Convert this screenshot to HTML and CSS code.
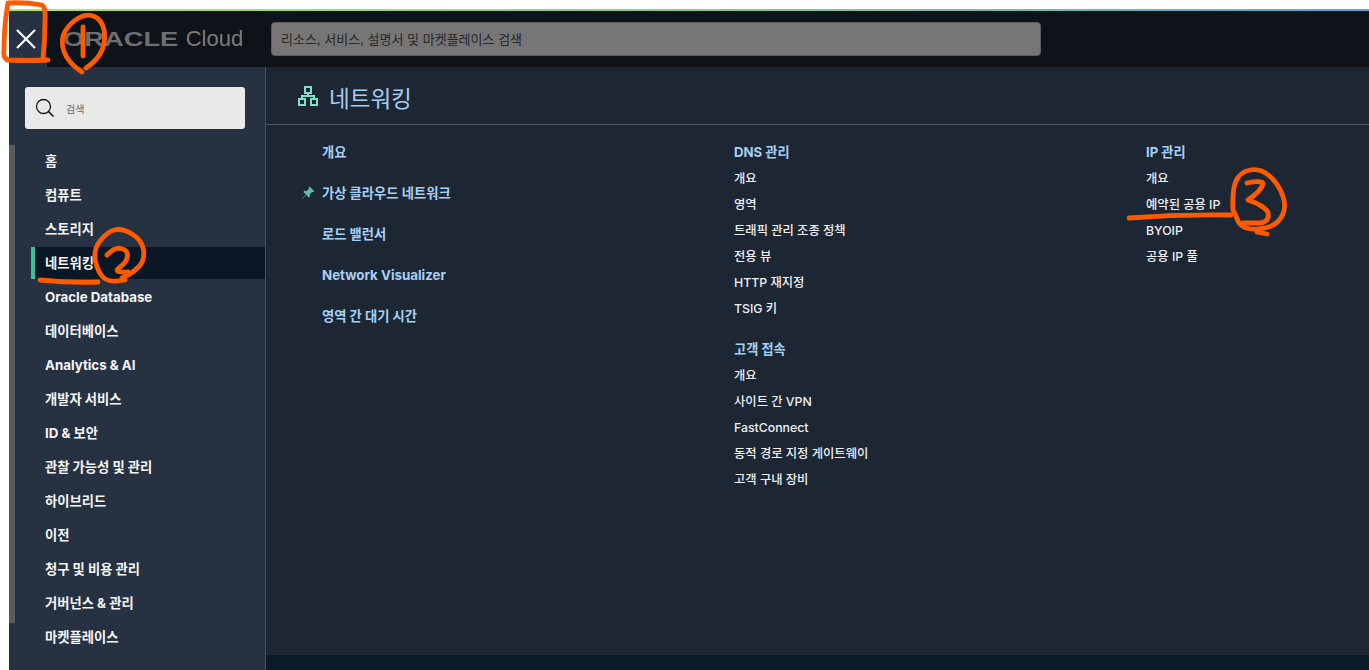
FILE: index.html
```html
<!DOCTYPE html>
<html lang="ko">
<head>
    <meta charset="UTF-8">
    <title>Oracle Cloud 네트워킹</title>
    <link rel="stylesheet" href="styles.css">
</head>
<body>
    <div class="console">
        <header class="topbar">
            <button class="close-btn" type="button">
                <svg width="20" height="20" viewBox="0 0 20 20"><path d="M1 1 19 19M19 1 1 19" stroke="#fff" stroke-width="2.2" fill="none"/></svg>
            </button>
            <div class="brand"><span class="brand-oracle">ORACLE</span><span class="brand-cloud">Cloud</span></div>
            <div class="top-search">리소스, 서비스, 설명서 및 마켓플레이스 검색</div>
        </header>
        <div class="main">
            <aside class="sidebar">
                <div class="scroll-thumb"></div>
                <div class="side-search">
                    <svg width="20" height="20" viewBox="0 0 20 20"><circle cx="8.5" cy="8.5" r="7" stroke="#1a1a1a" stroke-width="1.3" fill="none"/><path d="M13.6 13.6 18.5 18.5" stroke="#1a1a1a" stroke-width="1.6"/></svg>
                    <span>검색</span>
                </div>
                <nav class="side-nav">
                    <a>홈</a>
                    <a>컴퓨트</a>
                    <a>스토리지</a>
                    <a class="active">네트워킹</a>
                    <a>Oracle Database</a>
                    <a>데이터베이스</a>
                    <a>Analytics &amp; AI</a>
                    <a>개발자 서비스</a>
                    <a>ID &amp; 보안</a>
                    <a>관찰 가능성 및 관리</a>
                    <a>하이브리드</a>
                    <a>이전</a>
                    <a>청구 및 비용 관리</a>
                    <a>거버넌스 &amp; 관리</a>
                    <a>마켓플레이스</a>
                </nav>
            </aside>
            <section class="content">
                <h1 class="page-title">
                    <svg width="20" height="20" viewBox="0 0 20 20" fill="none" stroke="#7fe0c8" stroke-width="2"><rect x="7" y="1" width="6" height="6"/><rect x="1" y="13" width="6" height="6"/><rect x="13" y="13" width="6" height="6"/><path d="M10 7V10M4 13V10H16V13"/></svg>
                    <span>네트워킹</span>
                </h1>
                <div class="columns">
                    <div class="col col-main">
                        <a>개요</a>
                        <a class="pinned">
                            <svg class="pin" width="14" height="14" viewBox="0 0 14 14"><path d="M8.6 0.5 13.5 5.4 12.4 6.2 11.4 5.8 8.8 8.2 9 10.6 7.8 11.4 5.2 8.8 1.2 13 0.8 12.8 4.9 8.4 2.4 5.9 3.3 4.8 5.7 5 8.1 2.5 7.7 1.5Z" fill="#5fbfa2"/></svg>
                            가상 클라우드 네트워크
                        </a>
                        <a>로드 밸런서</a>
                        <a>Network Visualizer</a>
                        <a>영역 간 대기 시간</a>
                    </div>
                    <div class="col col-links">
                        <div class="group">
                            <h2>DNS 관리</h2>
                            <a>개요</a>
                            <a>영역</a>
                            <a>트래픽 관리 조종 정책</a>
                            <a>전용 뷰</a>
                            <a>HTTP 재지정</a>
                            <a>TSIG 키</a>
                        </div>
                        <div class="group">
                            <h2>고객 접속</h2>
                            <a>개요</a>
                            <a>사이트 간 VPN</a>
                            <a>FastConnect</a>
                            <a>동적 경로 지정 게이트웨이</a>
                            <a>고객 구내 장비</a>
                        </div>
                    </div>
                    <div class="col col-links">
                        <div class="group">
                            <h2>IP 관리</h2>
                            <a>개요</a>
                            <a>예약된 공용 IP</a>
                            <a>BYOIP</a>
                            <a>공용 IP 풀</a>
                        </div>
                    </div>
                </div>
            </section>
        </div>
    </div>

    <!-- 주황색 손글씨 표시 -->
    <svg class="marks" width="1369" height="670" viewBox="0 0 1369 670" fill="none" stroke="#ff5a00" stroke-width="4.8" stroke-linecap="round" stroke-linejoin="round">
        <path d="M7 59Q3 58 4 50Q4 25 8 3Q25 2 42 5Q46 8 45 20Q45 40 43 58M48 60Q28 61 7 60"/>
        <path d="M82 72Q68 63 64 51.5Q60 40 65 31.5Q70 23 78.5 18Q87 13 94.5 16.5Q102 20 104 30Q106 40 102 50Q98 60 86 68"/>
        <path d="M83 27V56"/>
        <path d="M40 280Q70 283 98 282"/>
        <path d="M125 280Q110 283 104 278Q98 273 95.5 261.5Q93 250 100 241Q107 232 114.5 230Q122 228 132 234Q142 240 143.5 250Q145 260 139 266.5Q133 273 122 278"/>
        <path d="M107 255Q115 247 121 248.5Q128 250 127.5 256Q127 262 119.5 267.5Q112 273 128 272"/>
        <path d="M1129 218Q1180 214 1231 215"/>
        <path d="M1233 210Q1232 190 1236 181Q1240 172 1250 170Q1260 168 1269 175.5Q1278 183 1282.5 195Q1287 207 1282 216Q1277 225 1267 227.5Q1257 230 1248.5 228.5Q1240 227 1237.5 220Q1235 213 1233 210"/>
        <path d="M1247 183Q1263 180 1263 184Q1262 190 1248 200Q1263 205 1268 212Q1270 222 1260 223L1243 223"/>
        <path d="M1257 232 1267 234"/>
    </svg>
</body>
</html>
```

FILE: styles.css
```css
* {
    box-sizing: border-box;
}
html, body {
    height: 100%;
}
body {
    margin: 0;
    padding: 9px 0 0 9px;
    background-color: #fff;
    font-family: Inter, "Noto Sans CJK KR", sans-serif;
    overflow: hidden;
}
a {
    display: block;
}
.console {
    height: 661px;
    display: flex;
    flex-direction: column;
    border-top: 2px solid;
    border-image: linear-gradient(90deg, #b5e35f 0%, #7cc79c 60%, #5aa6d0 100%) 1;
}
.topbar {
    height: 56px;
    flex: none;
    display: flex;
    align-items: center;
    background-color: #0e1219;
}
.close-btn {
    width: 38px;
    height: 56px;
    padding: 0 4px 0 0;
    border: none;
    background-color: #263241;
    display: flex;
    align-items: center;
    justify-content: center;
}
.brand {
    width: 224px;
    padding-left: 16px;
    display: flex;
    align-items: center;
    gap: 7px;
    color: #7c7c7c;
    white-space: nowrap;
}
.brand-oracle {
    font-family: "Liberation Sans", sans-serif;
    font-size: 21px;
    font-weight: 700;
    transform: scaleX(1.3);
    transform-origin: left center;
    margin-right: 27px;
    color: #6f6f6f;
}
.brand-cloud {
    font-family: "Liberation Sans", sans-serif;
    font-size: 22px;
}
.top-search {
    width: 770px;
    height: 34px;
    padding-left: 9px;
    line-height: 33px;
    font-size: 13px;
    color: #262626;
    background-color: #767676;
    border: 1px solid #5d5d5d;
    border-radius: 4px;
}
.main {
    flex: 1;
    display: flex;
    min-height: 0;
}
.sidebar {
    position: relative;
    width: 257px;
    flex: none;
    background-color: #263241;
    border-right: 1px solid #45505d;
}
.scroll-thumb {
    position: absolute;
    left: 0;
    top: 78px;
    width: 6px;
    height: 478px;
    background-color: #5a5a5a;
}
.side-search {
    width: 220px;
    height: 42px;
    margin: 20px 0 0 16px;
    padding-left: 10px;
    display: flex;
    align-items: center;
    gap: 11px;
    background-color: #e9e9e7;
    border-radius: 3px;
    font-size: 10px;
    color: #66686b;
}
.side-nav {
    margin-top: 16px;
}
.side-nav a {
    height: 32px;
    margin-bottom: 2px;
    margin-left: 22px;
    padding-left: 14px;
    line-height: 32px;
    font-size: 13.3px;
    font-weight: 700;
    color: #f4f5f6;
    white-space: nowrap;
}
.side-nav a.active {
    background-color: #0a1724;
    border-left: 4px solid #3cbf9c;
    padding-left: 10px;
}
.content {
    flex: 1;
    min-width: 0;
    background-color: #1d2733;
    border-bottom: 15px solid #0b1a2a;
}
.page-title {
    height: 58px;
    margin: 0;
    padding-left: 32px;
    display: flex;
    align-items: center;
    gap: 11px;
    font-size: 22.5px;
    font-weight: 400;
    color: #a6cdf0;
    border-bottom: 1px solid #4b5560;
}
.page-title span {
    padding-top: 2px;
}
.columns {
    display: flex;
    padding-top: 14px;
}
.col {
    flex: none;
}
.col-main {
    width: 468px;
    padding-left: 56px;
}
.col-main a {
    position: relative;
    height: 41px;
    line-height: 26px;
    font-size: 13.3px;
    font-weight: 700;
    color: #a6d0f5;
}
.pin {
    position: absolute;
    left: -21px;
    top: 6px;
}
.col-links:nth-child(2) {
    width: 412px;
}
.group {
    margin-bottom: 14px;
}
.group h2 {
    margin: 0;
    height: 27px;
    line-height: 26px;
    font-size: 13.2px;
    font-weight: 700;
    color: #a6d0f5;
}
.group a {
    height: 26px;
    line-height: 26px;
    font-size: 12.3px;
    font-weight: 500;
    color: #eef1f4;
    white-space: nowrap;
}
.marks {
    position: absolute;
    left: 0;
    top: 0;
    pointer-events: none;
}
```
